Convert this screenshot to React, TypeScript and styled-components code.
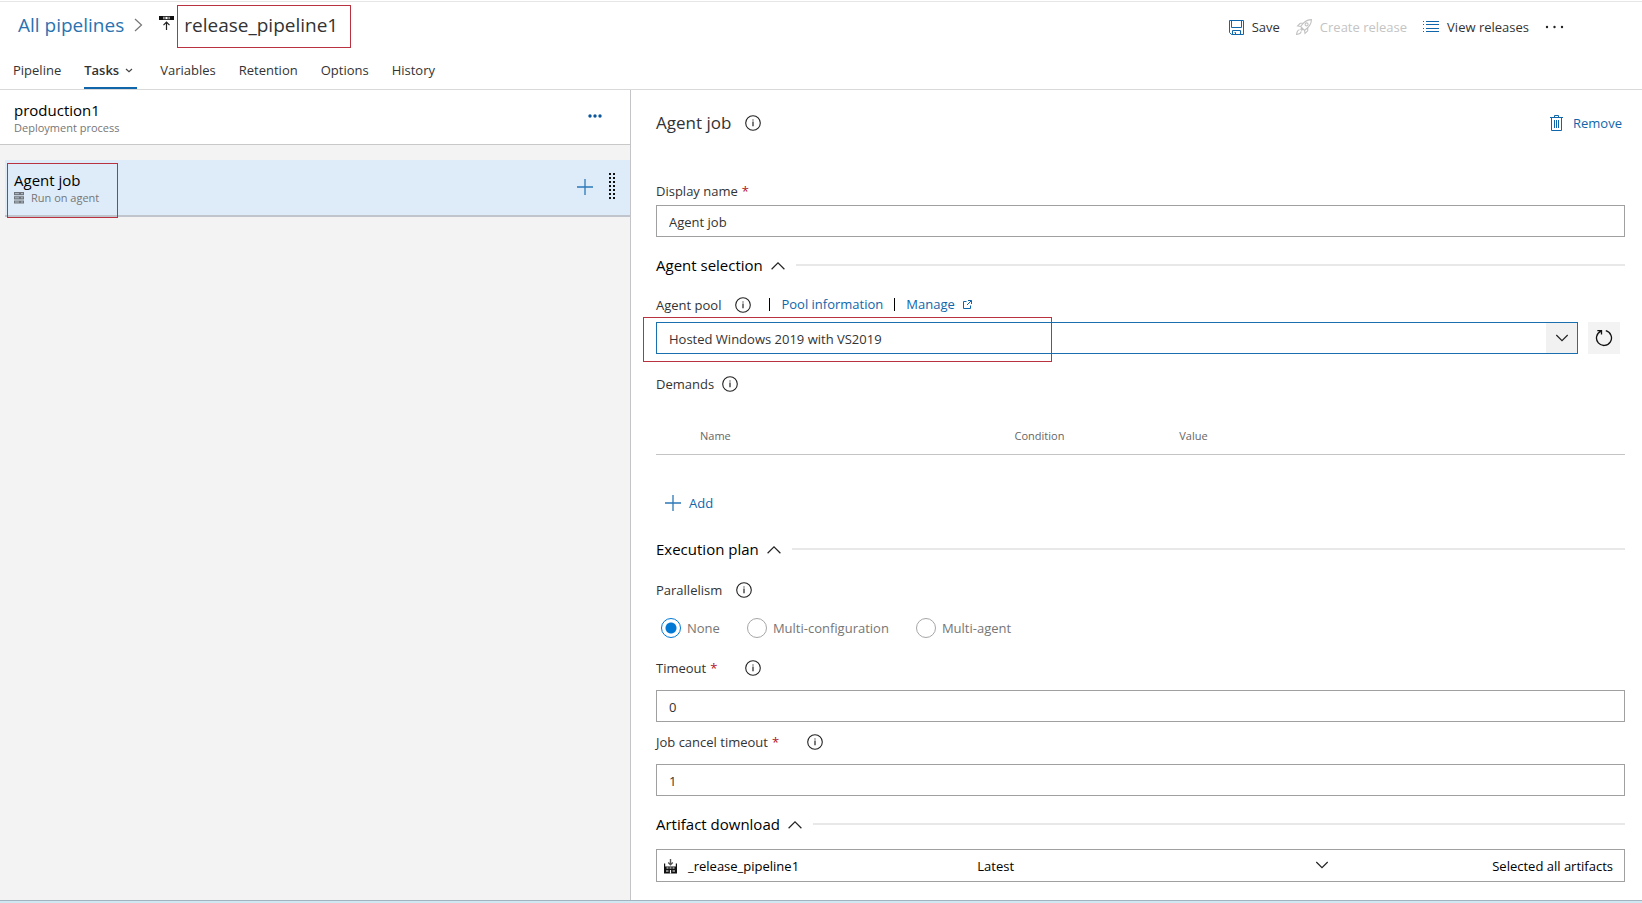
import React, { useState } from "react";
import styled, { createGlobalStyle } from "styled-components";

const GlobalStyle = createGlobalStyle`
  *, *::before, *::after { box-sizing: border-box; }
  html, body { margin: 0; padding: 0; }
  body, button, input, select {
    font-family: "Open Sans", "Noto Sans", sans-serif;
    font-size: 13px;
    line-height: 20px;
    color: #333;
  }
  body { background: #fff; }
  button { background: none; border: 0; padding: 0; cursor: pointer; }
  button:disabled { cursor: default; }
  h1, h2, h3, p { margin: 0; font-weight: 400; }
  svg { display: block; flex: none; }
`;

const blue = "#1066ab";
const mark = "#b8323f";

const Page = styled.div`
  min-height: 100vh;
  display: flex;
  flex-direction: column;
  padding-top: 1px;
`;

const Header = styled.header`
  display: flex;
  justify-content: space-between;
  border-top: 1px solid #e6e6e6;
  border-bottom: 1px solid #d9d9d9;
`;

const Breadcrumb = styled.nav`
  display: flex;
  align-items: flex-start;
  padding: 3px 0 0 18px;
  height: 47px;
`;

const Crumb = styled.a`
  font-size: 19px;
  line-height: 40px;
  color: #2a73b0;
  text-decoration: none;
`;

const CrumbIcon = styled.span`
  display: flex;
  align-items: center;
  height: 40px;
  margin-left: 10px;
`;

const PipelineIconSlot = styled.span`
  margin: 10px 3px 0 16px;
`;

const Title = styled.h1`
  height: 43px;
  padding: 0 12px 0 6px;
  border: 1px solid ${mark};
  font-size: 19px;
  line-height: 38px;
`;

const Tabs = styled.div`
  display: flex;
  gap: 23px;
  padding-left: 13px;
  height: 40px;
`;

const Tab = styled.button<{ $active?: boolean }>`
  display: flex;
  align-items: center;
  gap: 6px;
  padding-right: ${(p) => (p.$active ? "4px" : "0")};
  font-weight: ${(p) => (p.$active ? 600 : 400)};
  border-top: 4px solid transparent;
  border-bottom: 2px solid ${(p) => (p.$active ? blue : "transparent")};
`;

const Toolbar = styled.div`
  display: flex;
  gap: 16px;
  align-items: center;
  height: 50px;
  padding-right: 78px;
`;

const Command = styled.button<{ $link?: boolean }>`
  display: flex;
  align-items: center;
  gap: 8px;
  color: ${(p) => (p.$link ? blue : "#333")};
  &:disabled { color: #c4c4c4; }
`;

const RemoveButton = styled(Command)`
  gap: 10px;
  margin-right: 3px;
`;

const Body = styled.main`
  flex: 1;
  display: grid;
  grid-template-columns: minmax(300px, 631fr) minmax(500px, 1011fr);
`;

const Stages = styled.section`
  background: #f3f3f3;
  border-right: 1px solid #c4c4c8;
`;

const StageHeader = styled.div`
  display: flex;
  justify-content: space-between;
  height: 55px;
  padding: 10px 28px 0 14px;
  background: #fff;
  border-bottom: 1px solid #c8c8c8;
`;

const StageName = styled.h2`
  font-size: 15px;
  line-height: 20px;
  color: #000;
`;

const Caption = styled.p`
  display: flex;
  align-items: center;
  gap: 7px;
  font-size: 11px;
  line-height: 16px;
  color: #767676;
`;

const MoreButton = styled.button`
  align-self: flex-start;
  height: 32px;
`;

const JobRow = styled.div`
  position: relative;
  display: flex;
  justify-content: space-between;
  align-items: flex-start;
  height: 57px;
  margin: 15px 0 0 5px;
  padding: 10px 14px 0 9px;
  background: #deecf9;
  border-bottom: 2px solid #c0c4cc;
`;

const JobActions = styled.div`
  display: flex;
  align-items: center;
  gap: 15px;
  height: 33px;
`;

const JobMark = styled.div`
  position: absolute;
  left: 2px;
  top: 3px;
  width: 111px;
  height: 55px;
  border: 1px solid ${mark};
  pointer-events: none;
`;

const Details = styled.section`
  padding: 19px 17px 18px 25px;
`;

const DetailsHeader = styled.div`
  display: flex;
  justify-content: space-between;
  align-items: center;
  height: 28px;
`;

const DetailsTitle = styled.div`
  display: flex;
  align-items: center;
  gap: 14px;
  h2 { font-size: 17px; line-height: 28px; }
`;

const LabelRow = styled.div<{ $top: number; $gap?: number; $bottom?: number }>`
  display: flex;
  align-items: center;
  gap: ${(p) => p.$gap ?? 8}px;
  height: 28px;
  margin: ${(p) => p.$top}px 0 ${(p) => p.$bottom ?? 0}px;
`;

const Required = styled.span`
  color: #b3121d;
  margin-left: 4px;
`;

const InfoButton = styled.button`
  display: block;
`;

const TextInput = styled.input`
  display: block;
  width: 100%;
  height: 32px;
  padding: 2px 12px 0;
  border: 1px solid #a0a0a0;
  background: #fff;
`;

const SectionHeading = styled.div<{ $top: number }>`
  display: flex;
  align-items: center;
  height: 24px;
  margin-top: ${(p) => p.$top}px;
  &::after {
    content: "";
    flex: 1;
    height: 2px;
    margin-left: 11px;
    background: #e8e8e8;
  }
  h3 { font-size: 15px; line-height: 24px; }
  button {
    display: flex;
    align-items: center;
    gap: 8px;
    font: inherit;
    color: #000;
  }
  svg { margin-top: 2px; }
`;

const PoolLinks = styled.div`
  display: flex;
  align-items: center;
  gap: 11px;
  height: 20px;
  margin: 0 0 2px 4px;
`;

const PoolLink = styled.a`
  display: flex;
  align-items: center;
  gap: 8px;
  color: ${blue};
  text-decoration: none;
`;

const Divider = styled.span`
  width: 1px;
  height: 13px;
  background: #000;
`;

const PoolRow = styled.div`
  position: relative;
  display: flex;
  gap: 10px;
  padding-right: 5px;
`;

const PoolMark = styled.div`
  position: absolute;
  left: -13px;
  top: -5px;
  width: 409px;
  height: 45px;
  border: 1px solid ${mark};
  pointer-events: none;
`;

const PoolPicker = styled.div`
  display: flex;
  flex: 1;
  position: relative;
  border: 1px solid #1a6fae;
`;

const Select = styled.select<{ $inset: number; $dark?: boolean }>`
  appearance: none;
  width: 100%;
  height: 30px;
  padding: 2px 32px 0 ${(p) => p.$inset}px;
  border: 0;
  border-radius: 0;
  background: transparent;
  color: ${(p) => (p.$dark ? "#000" : "#333")};
`;

const PoolArrow = styled.span`
  position: absolute;
  right: 0;
  top: 0;
  bottom: 0;
  width: 31px;
  display: flex;
  align-items: center;
  justify-content: center;
  background: #f1f1f1;
  pointer-events: none;
`;

const RefreshButton = styled.button`
  display: flex;
  align-items: center;
  justify-content: center;
  width: 32px;
  height: 32px;
  background: #f3f3f3;
`;

const DemandTable = styled.table`
  width: 100%;
  margin-top: 20px;
  table-layout: fixed;
  border-collapse: collapse;
  border-bottom: 1px solid #c4c4c4;
  th {
    height: 36px;
    padding: 0;
    font-size: 11px;
    font-weight: 400;
    text-align: left;
    color: #666;
  }
  th:first-child { width: 37%; padding-left: 44px; }
  th:nth-child(2) { width: 17%; }
`;

const AddButton = styled(Command)`
  height: 32px;
  margin: 32px 0 0 9px;
`;

const RadioGroup = styled.div`
  display: flex;
  gap: 27px;
  height: 24px;
  margin: 12px 0 0 5px;
`;

const RadioLabel = styled.label`
  display: flex;
  align-items: center;
  gap: 6px;
  color: #767676;
`;

const Radio = styled.input`
  appearance: none;
  width: 20px;
  height: 20px;
  margin: 0;
  border: 1px solid #a6a6a6;
  border-radius: 50%;
  &:checked {
    border-color: #0078d4;
    background: radial-gradient(circle, #0078d4 5px, transparent 6px);
  }
`;

const ArtifactRow = styled.div`
  display: grid;
  grid-template-columns: 67fr 76fr 57fr;
  align-items: center;
  height: 33px;
  margin-top: 13px;
  padding-right: 11px;
  border: 1px solid #a0a0a0;
  color: #000;
`;

const ArtifactName = styled.label`
  display: flex;
  align-items: center;
  gap: 11px;
  padding: 2px 0 0 7px;
`;

const ArtifactVersion = styled.div`
  display: flex;
  align-items: center;
  position: relative;
`;

const VersionArrow = styled.span`
  position: absolute;
  right: 12px;
  pointer-events: none;
`;

const ArtifactScope = styled.span`
  padding-top: 2px;
  text-align: right;
`;

const Footer = styled.footer`
  height: 3px;
  border-top: 1px solid #a3b4c0;
  background: #d0e8f2;
`;

const InfoIcon = () => (
  <svg width="16" height="16" viewBox="0 0 16 16" fill="none" stroke="#222">
    <circle cx="8" cy="8" r="7.300" strokeWidth="1.100" />
    <path d="M8 6.600v4.600M8 4.400v1.200" strokeWidth="1.200" />
  </svg>
);

const Chevron = ({ up }: { up?: boolean }) => (
  <svg width="14" height="8" viewBox="0 0 14 8" fill="none" stroke="#222" strokeWidth="1.200">
    <path d={up ? "M.6 7.2 7 .9l6.4 6.3" : "M1.3 1 7 6.6 12.7 1"} />
  </svg>
);

const Plus = () => (
  <svg width="16" height="16" viewBox="0 0 16 16" stroke="#2b78b8" strokeWidth="1.300">
    <path d="M8 0v16M0 8h16" />
  </svg>
);

const PipelineIcon = () => (
  <svg width="15" height="16" viewBox="0 0 15 16" fill="none">
    <path d="M0 1h4.500v4H0zM10.500 1H15v4h-4.500z" fill="#111" />
    <path d="M4 1h7v4H4z" fill="#333" />
    <path d="M6.500 2h2v2h-2zM4.500 2h.8v2h-.8zM9.700 2h.8v2h-.8z" fill="#fff" />
    <path d="M7.500 15V7.300M4.500 10.200l3-3 3 3" stroke="#222" strokeWidth="1.200" />
  </svg>
);

const SaveIcon = () => (
  <svg width="15" height="15" viewBox="0 0 15 15" fill="none" stroke={blue}>
    <path d="M.5.500h14v14H2.500l-2-2zM2.500.500v7h10v-7M3.500 14.500v-4h8v4M6.500 14.500v-2M5.500 12.500h1" />
  </svg>
);

const RocketIcon = () => (
  <svg width="16" height="16" viewBox="0 0 16 16" fill="none" stroke="#c2c2c2" strokeWidth="1.100">
    <path d="M15.400.6c-3.600 0-6 1.300-8.200 3.700L4.600 7.500l3.900 3.900 3.200-2.600C14.100 6.600 15.400 4.200 15.400.6z" />
    <path d="M7.400 4.300H4.200L1.600 7l3 .5M11.700 8.600v3.200L9 14.400l-.5-3" />
    <circle cx="10.600" cy="5.400" r="1.500" />
    <path d="M6 9l-1.200 1.200 1 1L7 10M3.600 10.800c-1.700.2-2.700 1.400-3 4.600 3.200-.3 4.400-1.300 4.600-3" />
  </svg>
);

const ListIcon = () => (
  <svg width="16" height="12" viewBox="0 0 16 12" stroke={blue}>
    <path d="M3 .5h13M3 3.500h13M3 7.500h13M3 10.500h13M0 .5h1M0 3.500h1M0 7.500h1M0 10.500h1" />
  </svg>
);

const TrashIcon = () => (
  <svg width="13" height="17" viewBox="0 0 13 17" fill="none" stroke={blue}>
    <path d="M0 2.500h13M4.500 2.500v-2h4v2M1.500 2.500v13h10v-13M4.500 5v8M6.500 5v8M8.500 5v8" />
  </svg>
);

const Dots = ({ color, size = 14, r }: { color: string; size?: number; r: number }) => (
  <svg width={size} height="4" viewBox={`0 0 ${size} 4`} fill={color}>
    <circle cx="2" cy="2" r={r} />
    <circle cx={size / 2} cy="2" r={r} />
    <circle cx={size - 2} cy="2" r={r} />
  </svg>
);

const DragHandle = () => (
  <svg width="8" height="29" viewBox="0 0 8 29" fill="#111">
    {[0, 1, 2, 3, 4, 5, 6].map((row) => (
      <g key={row}>
        <rect x="1" y={row * 4 + 1} width="2" height="2" />
        <rect x="5" y={row * 4 + 1} width="2" height="2" />
      </g>
    ))}
  </svg>
);

const ServerIcon = () => (
  <svg width="10" height="12" viewBox="0 0 10 12">
    <path d="M0 0h10v3.200H0zM0 4.200h10v3.200H0zM0 8.400h10v3.200H0z" fill="#6f757b" />
    <path d="M1 1.600h4M1 5.800h4M1 10h4M7 1.600h2M7 5.800h2M7 10h2" stroke="#c3ccd4" strokeWidth=".8" />
  </svg>
);

const ExternalIcon = () => (
  <svg width="9" height="9" viewBox="0 0 9 9" fill="none" stroke={blue}>
    <path d="M3.500 1.500h-3v7h7v-3M5 .5h3.500V4M8.300.700 4 5" />
  </svg>
);

const RefreshIcon = () => (
  <svg width="18" height="18" viewBox="0 0 18 18" fill="none" stroke="#111" strokeWidth="1.300">
    <path d="M10.800 1.700a7.500 7.500 0 1 1-4.800.4M2.300 1.600h4.200v4" />
  </svg>
);

const BuildIcon = () => (
  <svg width="13" height="15" viewBox="0 0 13 15" fill="none">
    <path d="M0 4.500h1.200V7.500h10.600v-3H13v10H0z" fill="#111" />
    <path d="M2.500 9h2M5.500 9h2M8.500 9h2M2 12h2.500M8.500 12H11M6.500 11v3.500" stroke="#fff" strokeWidth="1.200" />
    <path d="M6.500 0v5.500M4.200 3.600l2.300 2.200 2.300-2.200" stroke="#555" strokeWidth="1.400" />
  </svg>
);

const Info = ({ about }: { about: string }) => (
  <InfoButton type="button" aria-label={`About ${about}`}>
    <InfoIcon />
  </InfoButton>
);

const Section = ({ title, top }: { title: string; top: number }) => (
  <SectionHeading $top={top}>
    <h3>
      <button type="button" aria-expanded="true">
        {title}
        <Chevron up />
      </button>
    </h3>
  </SectionHeading>
);

export default function App() {
  const [name, setName] = useState("Agent job");
  const [timeout, setTimeoutValue] = useState("0");
  const [cancelTimeout, setCancelTimeout] = useState("1");
  const [parallelism, setParallelism] = useState("None");

  return (
    <>
      <GlobalStyle />
      <Page>
        <Header>
          <div>
            <Breadcrumb aria-label="Breadcrumb">
              <Crumb href="#pipelines">All pipelines</Crumb>
              <CrumbIcon>
                <svg width="9" height="14" viewBox="0 0 9 14" fill="none" stroke="#777" strokeWidth="1.200">
                  <path d="M1 1l6.500 6L1 13" />
                </svg>
              </CrumbIcon>
              <PipelineIconSlot>
                <PipelineIcon />
              </PipelineIconSlot>
              <Title>release_pipeline1</Title>
            </Breadcrumb>
            <Tabs>
              <Tab type="button">Pipeline</Tab>
              <Tab type="button" $active>
                Tasks
                <svg width="8" height="5" viewBox="0 0 8 5" fill="none" stroke="#444" strokeWidth="1.200">
                  <path d="M1 1l3 2.600L7 1" />
                </svg>
              </Tab>
              <Tab type="button">Variables</Tab>
              <Tab type="button">Retention</Tab>
              <Tab type="button">Options</Tab>
              <Tab type="button">History</Tab>
            </Tabs>
          </div>
          <Toolbar>
            <Command type="button"><SaveIcon />Save</Command>
            <Command type="button" disabled><RocketIcon />Create release</Command>
            <Command type="button"><ListIcon />View releases</Command>
            <Command type="button" aria-label="More actions"><Dots color="#222" size={19} r={1.2} /></Command>
          </Toolbar>
        </Header>

        <Body>
          <Stages>
            <StageHeader>
              <div>
                <StageName>production1</StageName>
                <Caption>Deployment process</Caption>
              </div>
              <MoreButton type="button" aria-label="Stage actions"><Dots color="#0b569c" r={1.7} /></MoreButton>
            </StageHeader>
            <JobRow>
              <div>
                <StageName>Agent job</StageName>
                <Caption><ServerIcon />Run on agent</Caption>
              </div>
              <JobActions>
                <button type="button" aria-label="Add a task"><Plus /></button>
                <button type="button" aria-label="Reorder job"><DragHandle /></button>
              </JobActions>
              <JobMark />
            </JobRow>
          </Stages>

          <Details>
            <DetailsHeader>
              <DetailsTitle>
                <h2>Agent job</h2>
                <Info about="agent job" />
              </DetailsTitle>
              <RemoveButton type="button" $link><TrashIcon />Remove</RemoveButton>
            </DetailsHeader>

            <LabelRow $top={40}>
              <label htmlFor="name">Display name<Required>*</Required></label>
            </LabelRow>
            <TextInput id="name" value={name} onChange={(e) => setName(e.target.value)} />

            <Section title="Agent selection" top={16} />
            <LabelRow $top={14} $gap={14} $bottom={3}>
              <label htmlFor="pool">Agent pool</label>
              <Info about="agent pool" />
              <PoolLinks>
                <Divider />
                <PoolLink href="#pool">Pool information</PoolLink>
                <Divider />
                <PoolLink href="#manage">Manage<ExternalIcon /></PoolLink>
              </PoolLinks>
            </LabelRow>
            <PoolRow>
              <PoolPicker>
                <Select id="pool" $inset={12}>
                  <option>Hosted Windows 2019 with VS2019</option>
                </Select>
                <PoolArrow><Chevron /></PoolArrow>
              </PoolPicker>
              <RefreshButton type="button" aria-label="Refresh pools"><RefreshIcon /></RefreshButton>
              <PoolMark />
            </PoolRow>

            <LabelRow $top={16}>
              <span>Demands</span>
              <Info about="demands" />
            </LabelRow>
            <DemandTable>
              <thead>
                <tr>
                  <th scope="col">Name</th>
                  <th scope="col">Condition</th>
                  <th scope="col">Value</th>
                </tr>
              </thead>
            </DemandTable>
            <AddButton type="button" $link><Plus />Add</AddButton>

            <Section title="Execution plan" top={18} />
            <LabelRow $top={15} $gap={14}>
              <span id="parallelism">Parallelism</span>
              <Info about="parallelism" />
            </LabelRow>
            <RadioGroup role="radiogroup" aria-labelledby="parallelism">
              {["None", "Multi-configuration", "Multi-agent"].map((option) => (
                <RadioLabel key={option}>
                  <Radio
                    type="radio"
                    name="parallelism"
                    checked={parallelism === option}
                    onChange={() => setParallelism(option)}
                  />
                  {option}
                </RadioLabel>
              ))}
            </RadioGroup>

            <LabelRow $top={14} $gap={28} $bottom={8}>
              <label htmlFor="timeout">Timeout<Required>*</Required></label>
              <Info about="timeout" />
            </LabelRow>
            <TextInput id="timeout" value={timeout} onChange={(e) => setTimeoutValue(e.target.value)} />
            <LabelRow $top={6} $gap={28} $bottom={8}>
              <label htmlFor="cancel">Job cancel timeout<Required>*</Required></label>
              <Info about="job cancel timeout" />
            </LabelRow>
            <TextInput id="cancel" value={cancelTimeout} onChange={(e) => setCancelTimeout(e.target.value)} />

            <Section title="Artifact download" top={16} />
            <ArtifactRow>
              <ArtifactName htmlFor="version"><BuildIcon />_release_pipeline1</ArtifactName>
              <ArtifactVersion>
                <Select id="version" $inset={0} $dark>
                  <option>Latest</option>
                </Select>
                <VersionArrow><Chevron /></VersionArrow>
              </ArtifactVersion>
              <ArtifactScope>Selected all artifacts</ArtifactScope>
            </ArtifactRow>
          </Details>
        </Body>
        <Footer />
      </Page>
    </>
  );
}
